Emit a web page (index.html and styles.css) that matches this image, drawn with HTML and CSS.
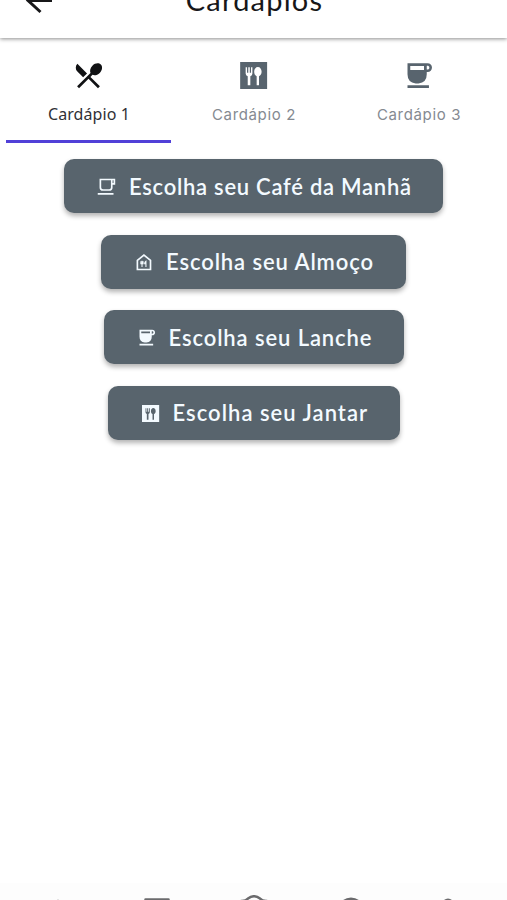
FILE: index.html
```html
<!DOCTYPE html>
<html lang="pt-BR">
<head>
    <meta charset="UTF-8">
    <meta name="viewport" content="width=device-width, initial-scale=1.0">
    <title>Cardápios</title>
    <link rel="stylesheet" href="styles.css">
</head>
<body>
    <header class="header">
        <svg class="back" viewBox="0 0 36 36"><path d="M31 17.500H7M19.500 5.500L7 17.500l12.500 11.500" fill="none" stroke="currentColor" stroke-width="3"/></svg>
        <h1>Cardápios</h1>
    </header>

    <nav class="tabs">
        <a class="tab active">
            <svg viewBox="0 0 24 24"><path d="M8.1 13.34l2.83-2.83L3.91 3.5a4.008 4.008 0 0 0 0 5.66l4.19 4.18zm6.78-1.81c1.53.71 3.68.21 5.27-1.38 1.91-1.91 2.28-4.65.81-6.12-1.46-1.46-4.2-1.1-6.12.81-1.59 1.59-2.09 3.74-1.38 5.27L3.7 19.87l1.41 1.41L12 14.41l6.88 6.88 1.41-1.41L13.41 13l1.47-1.47z"/></svg>
            <span>Cardápio 1</span>
        </a>
        <a class="tab">
            <svg viewBox="0 0 24 24"><path fill-rule="evenodd" d="M2.3 2.2h19.6v19.6H2.3zM6.3 6v4.5q0 1.5 1.5 2V19h1.900v-6.500q1.500-.5 1.500-2V6h-1v4h-.9V6H8.200v4h-.9V6zM15.200 5.800c-1.600 0-2.700 1.500-2.700 3.500 0 1.600.7 2.800 1.800 3.200V19H16v-6.500c1.100-.4 1.900-1.600 1.900-3.200 0-2-1.100-3.500-2.700-3.500z"/></svg>
            <span>Cardápio 2</span>
        </a>
        <a class="tab">
            <svg viewBox="0 0 24 24"><path fill-rule="evenodd" d="M4 21v-1.900h15.600V21zM10 17.800Q4 17 4 11V3h14.500c2 0 3.300 1.300 3.300 3.200s-1.300 3.300-3.300 3.300H18V11q0 6-6 6.800zM6 5v3h10V5zM18 5v2.600c1.200.2 1.900-.4 1.900-1.300S19.200 4.900 18 5z"/></svg>
            <span>Cardápio 3</span>
        </a>
    </nav>

    <main class="meals">
        <button class="meal breakfast">
            <svg viewBox="0 0 24 24"><path d="M2 20.500h18M5 4h13v9q0 3-3 3H8q-3 0-3-3zM18 4h3v5h-3" fill="none" stroke="currentColor" stroke-width="1.900"/></svg>
            <span>Escolha seu Café da Manhã</span>
        </button>
        <button class="meal lunch">
            <svg viewBox="0 0 24 24"><path d="M5 20V9.500l7.500-6 7.500 6V20z" fill="none" stroke="currentColor" stroke-width="1.900"/><path d="M9 10.500v3h2.500v-3M10.300 10v7M14.800 17v-6.500q-1.500 1-1.500 3h1.500" fill="none" stroke="currentColor" stroke-width="1.200"/></svg>
            <span>Escolha seu Almoço</span>
        </button>
        <button class="meal snack">
            <svg viewBox="0 0 24 24"><path fill-rule="evenodd" d="M4 21v-1.900h15.600V21zM10 17.800Q4 17 4 11V3h14.500c2 0 3.300 1.300 3.300 3.200s-1.300 3.300-3.300 3.300H18V11q0 6-6 6.800zM6 5v2h10V5zM18 5v2.600c1.200.2 1.900-.4 1.900-1.300S19.200 4.900 18 5z"/></svg>
            <span>Escolha seu Lanche</span>
        </button>
        <button class="meal dinner">
            <svg viewBox="0 0 24 24"><path fill-rule="evenodd" d="M2.300 2.200h19.600v19.600H2.300zM6.300 6v4.500q0 1.500 1.500 2V19h1.900v-6.500q1.500-.5 1.500-2V6h-1v4h-.9V6H8.200v4h-.9V6zM15.200 5.800c-1.600 0-2.700 1.500-2.700 3.500 0 1.600.7 2.800 1.800 3.200V19H16v-6.500c1.100-.4 1.900-1.600 1.900-3.200 0-2-1.100-3.500-2.700-3.500z"/></svg>
            <span>Escolha seu Jantar</span>
        </button>
    </main>

    <!-- Bottom navigation, cut off by the viewport -->
    <footer class="bottom-nav">
        <svg viewBox="0 0 34 34"><path d="M17 4.400L3 17h4v13h7v-9h6v9h7V17h4z"/></svg>
        <svg viewBox="0 0 34 34"><path d="M5.500 4.500h23v24h-23z" fill="none" stroke="currentColor" stroke-width="2.500" stroke-linejoin="round"/></svg>
        <svg viewBox="0 0 34 34"><path d="M3 6q4 0 6-2.500 6-4.500 12 0Q23 6 27 6v24H3z" fill="none" stroke="currentColor" stroke-width="2.500"/></svg>
        <svg viewBox="0 0 34 34"><circle cx="12" cy="16" r="12" fill="none" stroke="currentColor" stroke-width="3"/></svg>
        <svg viewBox="0 0 34 34"><circle cx="10" cy="9.500" r="6"/></svg>
    </footer>
</body>
</html>
```

FILE: styles.css
```css
* {
    box-sizing: border-box;
}
body {
    display: flex;
    flex-direction: column;
    height: 900px;
    margin: 0;
    overflow: hidden;
    font-family: Lato, "Open Sans", sans-serif;
    background-color: #fff;
    color: #171719;
}
svg {
    display: block;
    flex: none;
    fill: currentColor;
}
.header {
    display: grid;
    grid-template-columns: 74px 1fr 72px;
    align-items: center;
    height: 75px;
    margin-top: -37px;
    box-shadow: 0 1px 4px rgba(0, 0, 0, 0.45);
}
.back {
    width: 36px;
    height: 36px;
    margin-left: 21px;
}
h1 {
    margin: 0 0 2px;
    font-size: 29px;
    font-weight: 400;
    letter-spacing: 1.2px;
    line-height: 36px;
    text-align: center;
}
.tabs {
    display: grid;
    grid-template-columns: repeat(3, 1fr);
    height: 105px;
    padding: 0 6px;
}
.tab {
    display: flex;
    flex-direction: column;
    align-items: center;
    padding-top: 21px;
    color: #58646e;
    border-bottom: 3px solid transparent;
}
.tab svg {
    width: 33px;
    height: 33px;
}
.tab span {
    margin-top: 12px;
    padding-left: 1px;
    font-family: Inter, sans-serif;
    font-size: 15px;
    line-height: 21px;
    letter-spacing: 0.65px;
    color: #858a91;
}
.tab.active {
    color: #111214;
    border-color: #5140d8;
}
.tab.active span {
    font-family: "Noto Sans", sans-serif;
    font-size: 16px;
    letter-spacing: 0.1px;
    color: #303136;
}
.meals {
    display: flex;
    flex-direction: column;
    align-items: center;
    gap: 21.6px;
    padding-top: 16px;
}
.meal {
    display: flex;
    align-items: center;
    height: 54px;
    padding: 1px 0 0 32px;
    border: none;
    border-radius: 10px;
    background-color: #58646d;
    color: #f3faff;
    font-family: Lato, sans-serif;
    font-size: 22px;
    font-weight: 600;
    white-space: nowrap;
    box-shadow: 0 3px 5px rgba(0, 0, 0, 0.3);
}
.meal svg {
    width: 21px;
    height: 21px;
    margin-right: 11px;
}
.meal span {
    padding-left: 1px;
    line-height: 30px;
    letter-spacing: 0.9px;
}
.breakfast {
    width: 379px;
}
.breakfast span {
    letter-spacing: 0.73px;
}
.lunch {
    width: 305px;
}
.snack {
    width: 300px;
}
.dinner {
    width: 292px;
}
.dinner span {
    letter-spacing: 1.03px;
}
.bottom-nav {
    display: grid;
    grid-template-columns: repeat(5, 1fr);
    justify-items: center;
    height: 17px;
    margin-top: auto;
    padding: 12px 2px 0 8px;
    background-color: #fdfdfd;
    color: #6b6b6d;
}
.bottom-nav svg {
    width: 34px;
    height: 34px;
}
```
